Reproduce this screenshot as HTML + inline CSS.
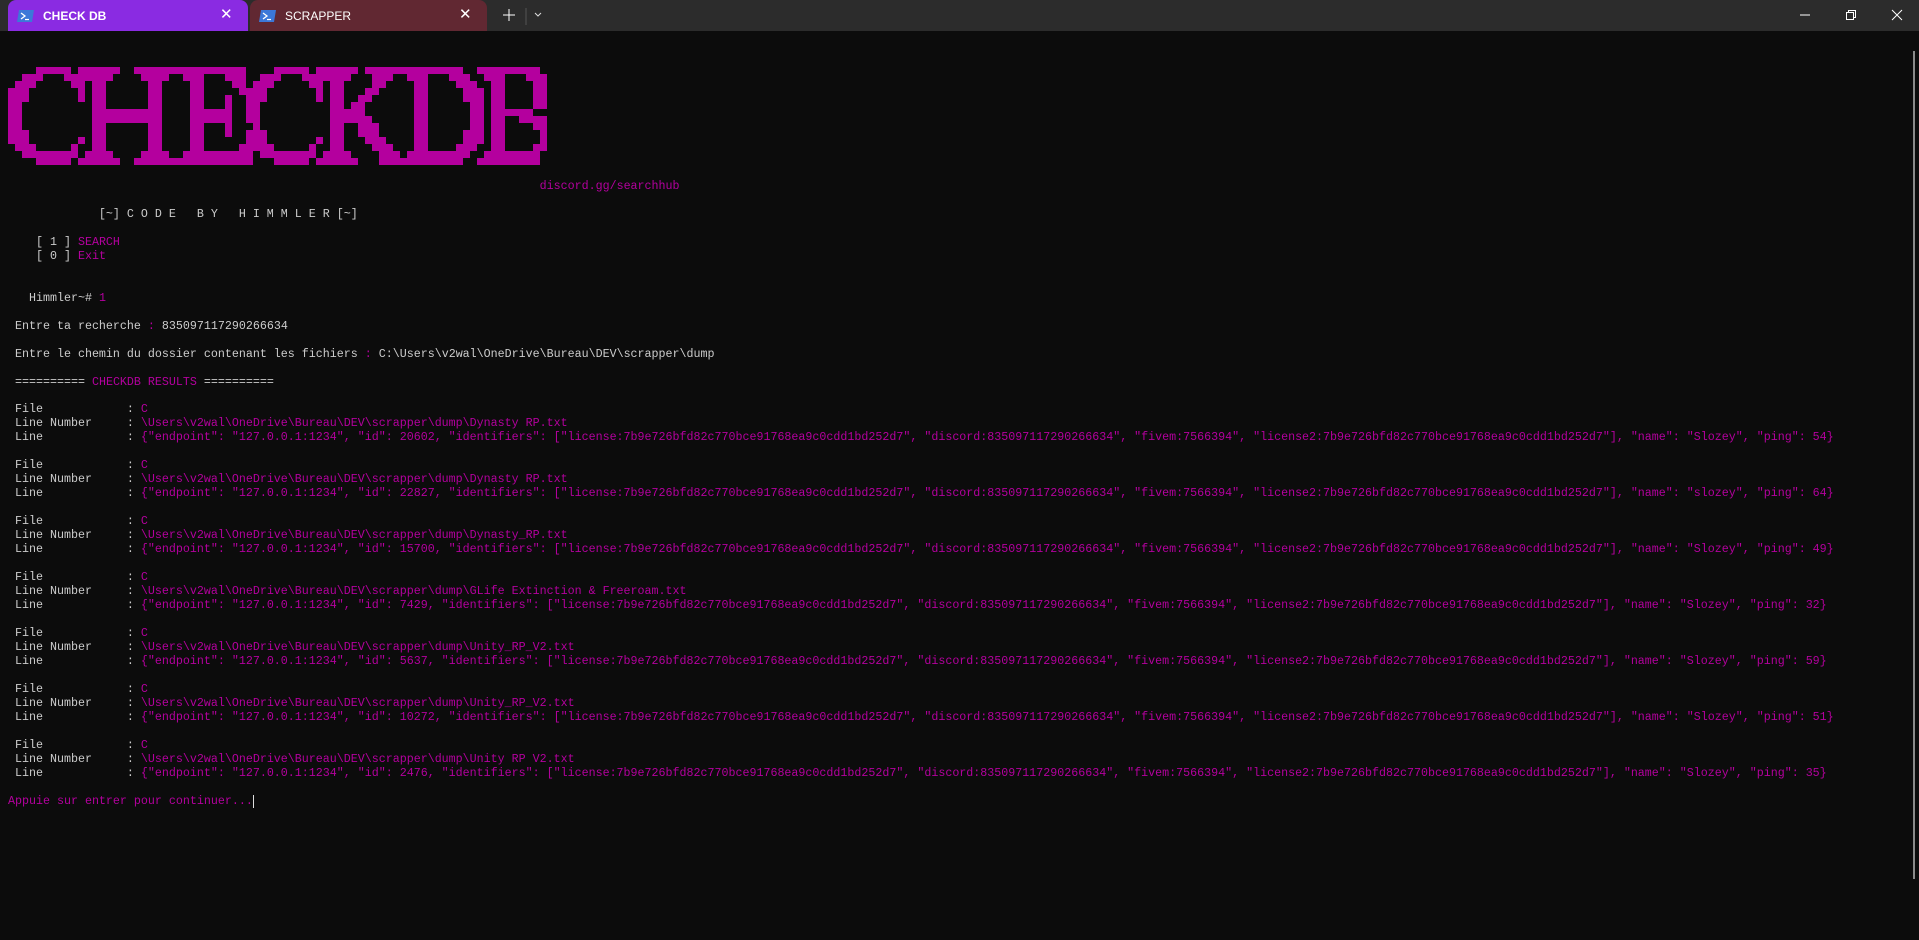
<!DOCTYPE html>
<html><head><meta charset="utf-8"><style>
*{margin:0;padding:0;box-sizing:border-box}
body{width:1919px;height:940px;background:#0c0c0c;overflow:hidden;position:relative;font-family:"Liberation Mono",monospace;font-size:11.67px;color:#cccccc}
.bar{position:absolute;left:0;top:0;width:1919px;height:31px;background:#2c2c2c}
.tab{position:absolute;top:0;height:31px;border-radius:8px 8px 0 0;font-family:"Liberation Sans",sans-serif;font-size:12px;color:#fff;font-weight:bold}
.tab .t{position:absolute;left:35px;top:9px}
.tab .x{position:absolute;top:5px;font-size:15px;font-weight:normal}
.l{position:absolute;left:8px;white-space:pre;line-height:14px;height:14px}
.m{color:#b4009e}
</style></head><body>
<div class="bar"></div>
<div class="tab" style="left:8px;width:240px;background:#8a2be2">
<svg style="position:absolute;left:9px;top:10px" width="17" height="12" viewBox="0 0 17 12"><path d="M2 0H17L15 12H0Z" fill="#3c78d8"/><path d="M4 3L8 6L4 9" stroke="#fff" stroke-width="1.3" fill="none"/><path d="M8 9.5H12" stroke="#fff" stroke-width="1.2"/></svg>
<span class="t">CHECK DB</span><span class="x" style="left:212px">✕</span></div>
<div class="tab" style="left:250px;width:237px;background:#612832">
<svg style="position:absolute;left:9px;top:10px" width="17" height="12" viewBox="0 0 17 12"><path d="M2 0H17L15 12H0Z" fill="#3c78d8"/><path d="M4 3L8 6L4 9" stroke="#fff" stroke-width="1.3" fill="none"/><path d="M8 9.5H12" stroke="#fff" stroke-width="1.2"/></svg>
<span class="t" style="font-weight:normal">SCRAPPER</span><span class="x" style="left:209px">✕</span></div>
<svg style="position:absolute;left:0;top:0" width="1919" height="31">
<path d="M503 15H515M509 9V21" stroke="#fff" stroke-width="1"/>
<path d="M526 8V25" stroke="#555" stroke-width="1"/>
<path d="M535 13L538 16L541 13" stroke="#ddd" stroke-width="1" fill="none"/>
<path d="M1800 15H1810" stroke="#fff" stroke-width="1"/>
<rect x="1846.5" y="12.5" width="7" height="7" stroke="#fff" fill="none"/>
<path d="M1848.5 12.5V10.5H1855.5V17.5H1853.5" stroke="#fff" fill="none"/>
<path d="M1892 10L1902 20M1902 10L1892 20" stroke="#fff" stroke-width="1"/>
</svg>
<div style="position:absolute;left:1913px;top:51px;width:2px;height:828px;background:#8a8a8a"></div>

<svg style="position:absolute;left:8px;top:67px" width="539" height="98" viewBox="0 0 77 14" shape-rendering="crispEdges" fill="#b4009e">
<g>
<rect x="4" y="0" width="5" height="1"/><rect x="10" y="0" width="6" height="1"/><rect x="18" y="0" width="16" height="1"/><rect x="38" y="0" width="5" height="1"/><rect x="44" y="0" width="6" height="1"/><rect x="51" y="0" width="14" height="1"/><rect x="67" y="0" width="9" height="1"/>
<rect x="2" y="1" width="3" height="1"/><rect x="8" y="1" width="7" height="1"/><rect x="19" y="1" width="4" height="1"/><rect x="25" y="1" width="3" height="1"/><rect x="31" y="1" width="3" height="1"/><rect x="36" y="1" width="3" height="1"/><rect x="42" y="1" width="7" height="1"/><rect x="52" y="1" width="3" height="1"/><rect x="57" y="1" width="3" height="1"/><rect x="63" y="1" width="3" height="1"/><rect x="68" y="1" width="3" height="1"/><rect x="74" y="1" width="3" height="1"/>
<rect x="1" y="2" width="3" height="1"/><rect x="9" y="2" width="2" height="1"/><rect x="12" y="2" width="2" height="1"/><rect x="20" y="2" width="2" height="1"/><rect x="26" y="2" width="2" height="1"/><rect x="32" y="2" width="2" height="1"/><rect x="35" y="2" width="3" height="1"/><rect x="43" y="2" width="2" height="1"/><rect x="46" y="2" width="2" height="1"/><rect x="52" y="2" width="2" height="1"/><rect x="58" y="2" width="2" height="1"/><rect x="64" y="2" width="3" height="1"/><rect x="69" y="2" width="2" height="1"/><rect x="75" y="2" width="2" height="1"/>
<rect x="0" y="3" width="3" height="1"/><rect x="10" y="3" width="1" height="1"/><rect x="12" y="3" width="2" height="1"/><rect x="20" y="3" width="2" height="1"/><rect x="26" y="3" width="2" height="1"/><rect x="33" y="3" width="4" height="1"/><rect x="44" y="3" width="1" height="1"/><rect x="46" y="3" width="2" height="1"/><rect x="51" y="3" width="2" height="1"/><rect x="58" y="3" width="2" height="1"/><rect x="65" y="3" width="3" height="1"/><rect x="69" y="3" width="2" height="1"/><rect x="75" y="3" width="2" height="1"/>
<rect x="0" y="4" width="3" height="1"/><rect x="10" y="4" width="1" height="1"/><rect x="12" y="4" width="2" height="1"/><rect x="20" y="4" width="2" height="1"/><rect x="26" y="4" width="2" height="1"/><rect x="31" y="4" width="1" height="1"/><rect x="34" y="4" width="3" height="1"/><rect x="44" y="4" width="1" height="1"/><rect x="46" y="4" width="2" height="1"/><rect x="50" y="4" width="2" height="1"/><rect x="58" y="4" width="2" height="1"/><rect x="65" y="4" width="3" height="1"/><rect x="69" y="4" width="2" height="1"/><rect x="75" y="4" width="2" height="1"/>
<rect x="0" y="5" width="2" height="1"/><rect x="12" y="5" width="2" height="1"/><rect x="20" y="5" width="2" height="1"/><rect x="26" y="5" width="2" height="1"/><rect x="31" y="5" width="1" height="1"/><rect x="34" y="5" width="2" height="1"/><rect x="46" y="5" width="2" height="1"/><rect x="49" y="5" width="2" height="1"/><rect x="58" y="5" width="2" height="1"/><rect x="66" y="5" width="2" height="1"/><rect x="69" y="5" width="2" height="1"/><rect x="75" y="5" width="2" height="1"/>
<rect x="0" y="6" width="2" height="1"/><rect x="12" y="6" width="10" height="1"/><rect x="26" y="6" width="6" height="1"/><rect x="34" y="6" width="2" height="1"/><rect x="46" y="6" width="5" height="1"/><rect x="58" y="6" width="2" height="1"/><rect x="66" y="6" width="2" height="1"/><rect x="69" y="6" width="6" height="1"/>
<rect x="0" y="7" width="2" height="1"/><rect x="12" y="7" width="10" height="1"/><rect x="26" y="7" width="6" height="1"/><rect x="34" y="7" width="2" height="1"/><rect x="46" y="7" width="6" height="1"/><rect x="58" y="7" width="2" height="1"/><rect x="66" y="7" width="2" height="1"/><rect x="69" y="7" width="2" height="1"/><rect x="73" y="7" width="4" height="1"/>
<rect x="0" y="8" width="2" height="1"/><rect x="12" y="8" width="2" height="1"/><rect x="20" y="8" width="2" height="1"/><rect x="26" y="8" width="2" height="1"/><rect x="31" y="8" width="1" height="1"/><rect x="35" y="8" width="1" height="1"/><rect x="46" y="8" width="2" height="1"/><rect x="50" y="8" width="3" height="1"/><rect x="58" y="8" width="2" height="1"/><rect x="66" y="8" width="2" height="1"/><rect x="69" y="8" width="2" height="1"/><rect x="75" y="8" width="2" height="1"/>
<rect x="0" y="9" width="3" height="1"/><rect x="12" y="9" width="2" height="1"/><rect x="20" y="9" width="2" height="1"/><rect x="26" y="9" width="2" height="1"/><rect x="31" y="9" width="1" height="1"/><rect x="34" y="9" width="3" height="1"/><rect x="46" y="9" width="2" height="1"/><rect x="50" y="9" width="3" height="1"/><rect x="58" y="9" width="2" height="1"/><rect x="65" y="9" width="3" height="1"/><rect x="69" y="9" width="2" height="1"/><rect x="76" y="9" width="1" height="1"/>
<rect x="0" y="10" width="3" height="1"/><rect x="10" y="10" width="1" height="1"/><rect x="12" y="10" width="2" height="1"/><rect x="20" y="10" width="2" height="1"/><rect x="26" y="10" width="2" height="1"/><rect x="34" y="10" width="3" height="1"/><rect x="44" y="10" width="1" height="1"/><rect x="46" y="10" width="2" height="1"/><rect x="51" y="10" width="3" height="1"/><rect x="58" y="10" width="2" height="1"/><rect x="65" y="10" width="3" height="1"/><rect x="69" y="10" width="2" height="1"/><rect x="76" y="10" width="1" height="1"/>
<rect x="1" y="11" width="3" height="1"/><rect x="9" y="11" width="1" height="1"/><rect x="12" y="11" width="2" height="1"/><rect x="20" y="11" width="2" height="1"/><rect x="26" y="11" width="2" height="1"/><rect x="33" y="11" width="5" height="1"/><rect x="43" y="11" width="1" height="1"/><rect x="46" y="11" width="2" height="1"/><rect x="52" y="11" width="3" height="1"/><rect x="58" y="11" width="2" height="1"/><rect x="64" y="11" width="3" height="1"/><rect x="69" y="11" width="2" height="1"/><rect x="75" y="11" width="2" height="1"/>
<rect x="2" y="12" width="8" height="1"/><rect x="11" y="12" width="4" height="1"/><rect x="19" y="12" width="4" height="1"/><rect x="25" y="12" width="10" height="1"/><rect x="36" y="12" width="8" height="1"/><rect x="45" y="12" width="4" height="1"/><rect x="53" y="12" width="3" height="1"/><rect x="57" y="12" width="9" height="1"/><rect x="68" y="12" width="8" height="1"/>
<rect x="4" y="13" width="5" height="1"/><rect x="10" y="13" width="6" height="1"/><rect x="18" y="13" width="17" height="1"/><rect x="38" y="13" width="5" height="1"/><rect x="44" y="13" width="6" height="1"/><rect x="53" y="13" width="12" height="1"/><rect x="67" y="13" width="9" height="1"/>
</g></svg>

<div class="l" style="top:179px">                                                                            <span class="m">discord.gg/searchhub</span></div>
<div class="l" style="top:207px">             [~] C O D E   B Y   H I M M L E R [~]</div>
<div class="l" style="top:235px">    [ 1 ] <span class="m">SEARCH</span></div>
<div class="l" style="top:249px">    [ 0 ] <span class="m">Exit</span></div>
<div class="l" style="top:291px">   Himmler~# <span class="m">1</span></div>
<div class="l" style="top:319px"> Entre ta recherche <span class="m">:</span> 835097117290266634</div>
<div class="l" style="top:347px"> Entre le chemin du dossier contenant les fichiers <span class="m">:</span> C:\Users\v2wal\OneDrive\Bureau\DEV\scrapper\dump</div>
<div class="l" style="top:375px"> ========== <span class="m">CHECKDB RESULTS</span> ==========</div>

<div class="l" style="top:402px"> File            : <span class="m">C</span></div>
<div class="l" style="top:416px"> Line Number     : <span class="m">\Users\v2wal\OneDrive\Bureau\DEV\scrapper\dump\Dynasty RP.txt</span></div>
<div class="l" style="top:430px"> Line            : <span class="m">{"endpoint": "127.0.0.1:1234", "id": 20602, "identifiers": ["license:7b9e726bfd82c770bce91768ea9c0cdd1bd252d7", "discord:835097117290266634", "fivem:7566394", "license2:7b9e726bfd82c770bce91768ea9c0cdd1bd252d7"], "name": "Slozey", "ping": 54}</span></div>

<div class="l" style="top:458px"> File            : <span class="m">C</span></div>
<div class="l" style="top:472px"> Line Number     : <span class="m">\Users\v2wal\OneDrive\Bureau\DEV\scrapper\dump\Dynasty RP.txt</span></div>
<div class="l" style="top:486px"> Line            : <span class="m">{"endpoint": "127.0.0.1:1234", "id": 22827, "identifiers": ["license:7b9e726bfd82c770bce91768ea9c0cdd1bd252d7", "discord:835097117290266634", "fivem:7566394", "license2:7b9e726bfd82c770bce91768ea9c0cdd1bd252d7"], "name": "slozey", "ping": 64}</span></div>

<div class="l" style="top:514px"> File            : <span class="m">C</span></div>
<div class="l" style="top:528px"> Line Number     : <span class="m">\Users\v2wal\OneDrive\Bureau\DEV\scrapper\dump\Dynasty_RP.txt</span></div>
<div class="l" style="top:542px"> Line            : <span class="m">{"endpoint": "127.0.0.1:1234", "id": 15700, "identifiers": ["license:7b9e726bfd82c770bce91768ea9c0cdd1bd252d7", "discord:835097117290266634", "fivem:7566394", "license2:7b9e726bfd82c770bce91768ea9c0cdd1bd252d7"], "name": "Slozey", "ping": 49}</span></div>

<div class="l" style="top:570px"> File            : <span class="m">C</span></div>
<div class="l" style="top:584px"> Line Number     : <span class="m">\Users\v2wal\OneDrive\Bureau\DEV\scrapper\dump\GLife Extinction &amp; Freeroam.txt</span></div>
<div class="l" style="top:598px"> Line            : <span class="m">{"endpoint": "127.0.0.1:1234", "id": 7429, "identifiers": ["license:7b9e726bfd82c770bce91768ea9c0cdd1bd252d7", "discord:835097117290266634", "fivem:7566394", "license2:7b9e726bfd82c770bce91768ea9c0cdd1bd252d7"], "name": "Slozey", "ping": 32}</span></div>

<div class="l" style="top:626px"> File            : <span class="m">C</span></div>
<div class="l" style="top:640px"> Line Number     : <span class="m">\Users\v2wal\OneDrive\Bureau\DEV\scrapper\dump\Unity_RP_V2.txt</span></div>
<div class="l" style="top:654px"> Line            : <span class="m">{"endpoint": "127.0.0.1:1234", "id": 5637, "identifiers": ["license:7b9e726bfd82c770bce91768ea9c0cdd1bd252d7", "discord:835097117290266634", "fivem:7566394", "license2:7b9e726bfd82c770bce91768ea9c0cdd1bd252d7"], "name": "Slozey", "ping": 59}</span></div>

<div class="l" style="top:682px"> File            : <span class="m">C</span></div>
<div class="l" style="top:696px"> Line Number     : <span class="m">\Users\v2wal\OneDrive\Bureau\DEV\scrapper\dump\Unity_RP_V2.txt</span></div>
<div class="l" style="top:710px"> Line            : <span class="m">{"endpoint": "127.0.0.1:1234", "id": 10272, "identifiers": ["license:7b9e726bfd82c770bce91768ea9c0cdd1bd252d7", "discord:835097117290266634", "fivem:7566394", "license2:7b9e726bfd82c770bce91768ea9c0cdd1bd252d7"], "name": "Slozey", "ping": 51}</span></div>

<div class="l" style="top:738px"> File            : <span class="m">C</span></div>
<div class="l" style="top:752px"> Line Number     : <span class="m">\Users\v2wal\OneDrive\Bureau\DEV\scrapper\dump\Unity RP V2.txt</span></div>
<div class="l" style="top:766px"> Line            : <span class="m">{"endpoint": "127.0.0.1:1234", "id": 2476, "identifiers": ["license:7b9e726bfd82c770bce91768ea9c0cdd1bd252d7", "discord:835097117290266634", "fivem:7566394", "license2:7b9e726bfd82c770bce91768ea9c0cdd1bd252d7"], "name": "Slozey", "ping": 35}</span></div>

<div class="l" style="top:794px"><span class="m">Appuie sur entrer pour continuer...</span></div>
<div style="position:absolute;left:253px;top:795px;width:1px;height:13px;background:#ddd"></div>
</body></html>
